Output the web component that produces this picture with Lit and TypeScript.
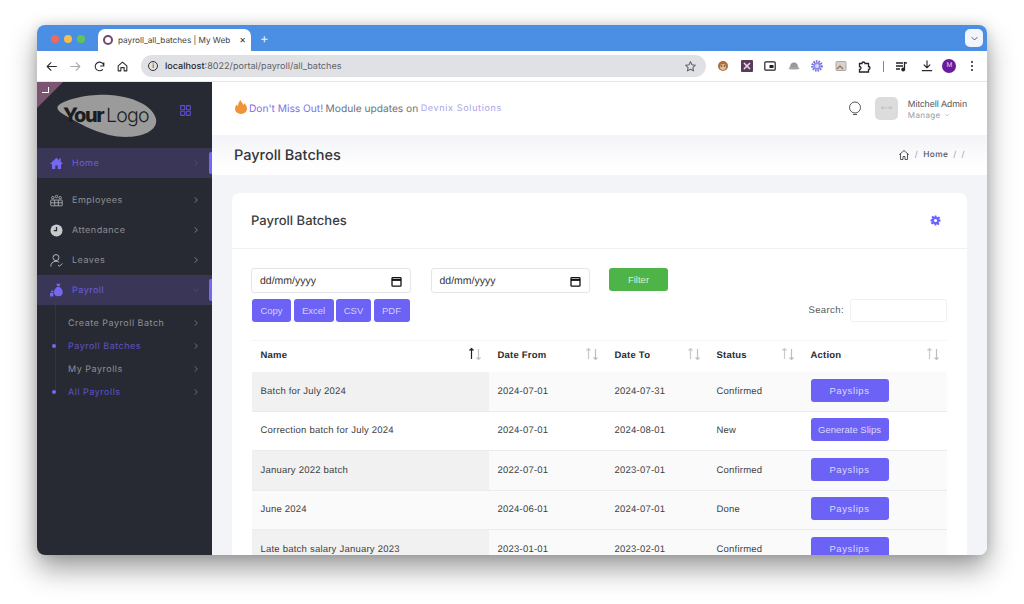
import { LitElement, css, html, svg } from 'lit';
import { customElement } from 'lit/decorators.js';

const ROWS = [
  ['Batch for July 2024', '2024-07-01', '2024-07-31', 'Confirmed', 'Payslips'],
  ['Correction batch for July 2024', '2024-07-01', '2024-08-01', 'New', 'Generate Slips'],
  ['January 2022 batch', '2022-07-01', '2023-07-01', 'Confirmed', 'Payslips'],
  ['June 2024', '2024-06-01', '2024-07-01', 'Done', 'Payslips'],
  ['Late batch salary January 2023', '2023-01-01', '2023-02-01', 'Confirmed', 'Payslips'],
];

const COLUMNS = [
  { name: 'Name', width: 237, active: true },
  { name: 'Date From', width: 117 },
  { name: 'Date To', width: 102 },
  { name: 'Status', width: 94 },
  { name: 'Action', width: 145 },
];

const SUB_ITEMS = [
  { name: 'Create Payroll Batch', active: false },
  { name: 'Payroll Batches', active: true },
  { name: 'My Payrolls', active: false },
  { name: 'All Payrolls', active: true },
];

const icon = (size: number, content: unknown, box = 24) => html`
  <svg width=${size} height=${size} viewBox="0 0 ${box} ${box}" fill="none" stroke="currentColor" stroke-width="2" stroke-linecap="round" stroke-linejoin="round">${content}</svg>
`;

const chevron = svg`<path d="M9 5l7 7-7 7" />`;
const chevronDown = svg`<path d="M5 9l7 7 7-7" />`;

const sortArrows = (active = false) => html`
  <svg class="sort" width="16" height="14" viewBox="0 0 16 14" fill="none" stroke-width="1.2">
    <g stroke=${active ? '#222' : '#c8cacd'}><path d="M4.5 12V1.5M2.500 3.500l2-2 2 2" /></g>
    <g stroke="#bcbec3"><path d="M11.5 2v10.500M9.500 10.500l2 2 2-2" /></g>
  </svg>
`;

@customElement('app-root')
export class AppRoot extends LitElement {
  renderTabBar() {
    return html`
      <div class="tabbar">
        <div class="lights"><i class="red"></i><i class="yellow"></i><i class="green"></i></div>
        <div class="tab">
          <span class="favicon"></span>
          <span class="tab-title">payroll_all_batches | My Web</span>
          <span class="tab-close">✕</span>
        </div>
        <span class="newtab">+</span>
        <span class="chrome-menu">${icon(9, chevronDown)}</span>
      </div>
    `;
  }

  renderToolbar() {
    return html`
      <div class="toolbar">
        <div class="nav">
          ${icon(13, svg`<path d="M21 12H4M11 5l-7 7 7 7" />`)}
          <span class="dim">${icon(13, svg`<path d="M3 12h17M13 5l7 7-7 7" />`)}</span>
          ${icon(13, svg`<path d="M20 11a8 8 0 1 0-2.3 6.6M20 5v6h-6" />`)}
          ${icon(13, svg`<path d="M4 11l8-7 8 7v9h-5v-6H9v6H4z" />`)}
        </div>
        <div class="omnibox">
          <span class="info">i</span>
          <span class="url"><b>localhost</b>:8022/portal/payroll/all_batches</span>
          ${icon(13, svg`<path d="M12 3l2.7 5.8 6.3.8-4.6 4.3 1.2 6.2L12 17l-5.6 3.1 1.2-6.2L3 9.6l6.3-.8z" />`)}
        </div>
        <div class="extensions">
          <svg width="12" height="12" viewBox="0 0 12 12"><circle cx="6" cy="6" r="5" fill="#a8703f" /><circle cx="6" cy="7" r="3" fill="#e5bd94" /><circle cx="4.5" cy="6" r=".8" fill="#333" /><circle cx="7.5" cy="6" r=".8" fill="#333" /></svg>
          <svg width="12" height="12" viewBox="0 0 12 12"><rect width="12" height="12" rx="1" fill="#5c3a5e" /><path d="M3 3l6 6M9 3L3 9" stroke="#e6dbe6" stroke-width="1.6" /></svg>
          <svg width="12" height="12" viewBox="0 0 12 12" fill="none"><rect x=".8" y="1.8" width="10.4" height="8.4" rx="1" stroke="#222" stroke-width="1.2" /><rect x="5.500" y="5" width="4" height="3" fill="#222" /></svg>
          <svg width="12" height="12" viewBox="0 0 12 12"><path d="M2 8c0-4 1.500-5.500 4-5.500S10 4 10 8z" fill="#9a9a9a" /><ellipse cx="6" cy="8.300" rx="5.500" ry="1.300" fill="#a5a5a5" /></svg>
          <svg width="12" height="12" viewBox="0 0 12 12"><circle cx="6" cy="6" r="4.600" fill="none" stroke="#6f6ae0" stroke-width="2.400" stroke-dasharray="1.500 1" /><circle cx="6" cy="6" r="3.800" fill="#8f8bea" /><circle cx="6" cy="6" r="2" fill="#d8d6f8" /></svg>
          <svg width="12" height="12" viewBox="0 0 12 12" fill="none"><rect x="1" y="1.500" width="10" height="9" rx="1" fill="#d6d3cf" stroke="#aaa" /><path d="M2 9l3-3 3 3" stroke="#a9765a" stroke-width="1.500" /></svg>
          <svg class="puzzle" width="13" height="13" viewBox="0 0 13 13" fill="none" stroke="#222" stroke-width="1.300"><path d="M1.500 3.500h2.500a1.500 1.500 0 0 1 3 0h3.500v3a1.500 1.500 0 0 1 0 3v2.500H1.500v-2.500a1.500 1.500 0 0 0 0-3z" /></svg>
          <span class="ext-divider"></span>
          <svg width="13" height="13" viewBox="0 0 13 13" fill="none" stroke="#222" stroke-width="1.300"><path d="M1 3h7M1 6h7M1 9h4M9.500 9.500V2.500l2.500 .6" /><circle cx="8.200" cy="9.500" r="1.300" fill="#222" /></svg>
          ${icon(14, svg`<path d="M12 3v12M7 10l5 5 5-5M4 20h16" />`)}
          <span class="profile">M</span>
          <span class="kebab"><i></i><i></i><i></i></span>
        </div>
      </div>
    `;
  }

  renderSidebar() {
    return html`
      <aside class="sidebar">
        <span class="corner"><i></i></span>
        <div class="brand">
          <svg class="logo" width="101" height="44" viewBox="0 0 101 44">
            <path d="M1 12C8 5 32 0 52 1c22 1 44 10 47 24 2 11-12 18-30 18C46 43 23 30 13 24 7 21-2 16 1 12z" fill="#9b9b9b" />
            <text x="6" y="28" font-family="Inter, sans-serif" fill="#1d1d20"><tspan font-size="20" font-weight="800" letter-spacing="-1.500">Your</tspan><tspan dx="3" font-size="19.500" font-weight="300" letter-spacing="-.8">Logo</tspan></text>
          </svg>
          <span class="apps">${icon(13, svg`<rect x="3" y="3" width="7.500" height="7.500" rx="1" /><rect x="13.500" y="3" width="7.500" height="7.500" rx="1" /><rect x="3" y="13.500" width="7.500" height="7.500" rx="1" /><rect x="13.500" y="13.500" width="7.500" height="7.500" rx="1" />`)}</span>
        </div>
        <a class="item active home">
          <svg class="item-icon" width="13" height="13" viewBox="0 0 13 13" fill="currentColor"><path d="M6.500 .8L.3 6.500l1 .9 .7-.6V12h3.300V8.500h2.400V12H11V6.800l.7 .6 1-.9-2-1.900V1.500H9v1.900z" /></svg>
          <span>Home</span>${icon(8, chevron)}
        </a>
        <div class="group">
          <a class="item">
            <svg class="item-icon" width="14" height="13" viewBox="0 0 14 13" fill="none" stroke="currentColor" stroke-width=".9"><rect x=".8" y="6" width="12.400" height="6.200" rx=".6" /><path d="M.8 9h12.400M5 6v6.200M9 6v6.200" /><circle cx="3" cy="3.500" r="1.300" /><circle cx="7" cy="2.200" r="1.300" /><circle cx="11" cy="3.500" r="1.300" /></svg>
            <span>Employees</span>${icon(8, chevron)}
          </a>
          <a class="item">
            <svg class="item-icon clock" width="13" height="13" viewBox="0 0 13 13"><circle cx="6.500" cy="6.500" r="6" fill="currentColor" /><path d="M6.500 3v3.700H3.800" fill="none" stroke="#282a33" stroke-width="1.300" /></svg>
            <span>Attendance</span>${icon(8, chevron)}
          </a>
          <a class="item">
            <svg class="item-icon" width="13" height="13" viewBox="0 0 13 13" fill="none" stroke="currentColor" stroke-width="1"><circle cx="6" cy="3.600" r="3" /><path d="M.8 12.500c0-3.200 2-5.200 5.200-5.200 1.300 0 2.300 .3 3.100 .9M8 11l1.500 1.300L12.300 9.500" /></svg>
            <span>Leaves</span>${icon(8, chevron)}
          </a>
        </div>
        <a class="item active open">
          <svg class="item-icon" width="14" height="14" viewBox="0 0 14 14" fill="currentColor"><path fill-rule="evenodd" d="M6.800 .3h4.400L10.300 3H7.700zM7.600 3.800h2.800c2 1.200 3.300 3.400 3.300 5.700 0 2.800-1.700 4.200-4.700 4.200S4.300 12.300 4.300 9.500c0-2.300 1.300-4.500 3.300-5.700z" /><rect x="0" y="10" width="3.600" height="4" rx=".5" /><rect x="1.200" y="7.600" width="2.600" height="1.800" rx=".4" /></svg>
          <span>Payroll</span>${icon(8, chevronDown)}
        </a>
        <div class="submenu">
          ${SUB_ITEMS.map(
            (s) => html`
              <a class="sub ${s.active ? 'on' : ''}">
                <span>${s.name}</span>${icon(8, chevron)}
              </a>
            `,
          )}
        </div>
      </aside>
    `;
  }

  renderHeader() {
    return html`
      <header class="topbar">
        <div class="promo">
          <svg width="12" height="14" viewBox="0 0 12 14"><path d="M5.500 0c.8 2.600 2.300 3.200 3 5 .5-.6 .8-1.300 .8-2C11 4.800 12 6.800 12 8.800 12 11.900 9.300 14 6 14S0 11.900 0 8.800c0-2 1-3.300 2-4.300 .2 .8 .5 1.300 1 1.700C3 3.800 4 1.500 5.500 0z" fill="#f0933a" /></svg>
          <span class="miss">Don't Miss Out!</span>
          <span>Module updates on</span>
          <span class="devnix">Devnix Solutions</span>
        </div>
        <div class="user">
          <svg class="bulb" width="14" height="15" viewBox="0 0 14 15" fill="none" stroke="#555" stroke-width="1"><circle cx="7" cy="6.500" r="5.500" /><path d="M5 13.500h4" /></svg>
          <span class="avatar">M × M</span>
          <div class="user-text">
            <span class="user-name">Mitchell Admin</span>
            <span class="manage">Manage ${icon(6, chevronDown)}</span>
          </div>
        </div>
      </header>
      <div class="titlebar">
        <h1>Payroll Batches</h1>
        <div class="crumbs">
          ${icon(12, svg`<path d="M3 11l9-8 9 8M5 9.500V21h5v-6h4v6h5V9.500" />`)}
          <span class="sep">/</span><b>Home</b><span class="sep">/</span><span class="sep">/</span>
        </div>
      </div>
    `;
  }

  renderDate() {
    return html`
      <div class="date">
        <span>dd/mm/yyyy</span>
        <svg width="11" height="11" viewBox="0 0 11 11" fill="none" stroke="#111" stroke-width="1.300"><rect x="1" y="1.600" width="9" height="8.600" rx=".8" /><path d="M1 3.900h9" stroke-width="2" /></svg>
      </div>
    `;
  }

  renderCard() {
    return html`
      <section class="card">
        <div class="card-head">
          <h2>Payroll Batches</h2>
          <svg width="11" height="11" viewBox="0 0 24 24" fill="#6c63ff"><path fill-rule="evenodd" d="M10 1h4l.7 3.200 1.900.8 2.800-1.800 2.800 2.800-1.800 2.800.8 1.900L23 10v4l-3.200.7-.8 1.900 1.800 2.800-2.800 2.800-2.800-1.800-1.900.8L14 23h-4l-.7-3.200-1.900-.8-2.800 1.800-2.800-2.800 1.800-2.800-.8-1.900L1 14v-4l3.200-.7.8-1.900-1.800-2.800 2.800-2.800 2.800 1.800 1.900-.8zM12 8.500a3.500 3.500 0 1 0 0 7 3.500 3.500 0 0 0 0-7z" /></svg>
        </div>
        <div class="card-body">
          <div class="filters">
            ${this.renderDate()} ${this.renderDate()}
            <button class="filter">Filter</button>
          </div>
          <div class="tools">
            <div class="exports">
              <button>Copy</button><button>Excel</button><button>CSV</button><button>PDF</button>
            </div>
            <label class="search">Search: <span class="search-box"></span></label>
          </div>
          <table>
            <colgroup>${COLUMNS.map((c) => html`<col style="width:${c.width}px" />`)}</colgroup>
            <thead>
              <tr>
                ${COLUMNS.map((c) => html`<th><span class="th-in">${c.name}${sortArrows(c.active)}</span></th>`)}
              </tr>
            </thead>
            <tbody>
              ${ROWS.map(
                (r) => html`
                  <tr>
                    <td>${r[0]}</td><td>${r[1]}</td><td>${r[2]}</td><td>${r[3]}</td>
                    <td><button class="slip ${r[4].length > 8 ? 'long' : ''}">${r[4]}</button></td>
                  </tr>
                `,
              )}
            </tbody>
          </table>
        </div>
      </section>
    `;
  }

  render() {
    return html`
      <div class="window">
        ${this.renderTabBar()} ${this.renderToolbar()}
        <div class="app">
          ${this.renderSidebar()}
          <main class="main">
            ${this.renderHeader()}
            <div class="content">${this.renderCard()}</div>
          </main>
        </div>
      </div>
    `;
  }

  static styles = css`
    :host {
      display: block;
      width: 1024px;
      height: 604px;
      box-sizing: border-box;
      padding: 25px 37px 49px;
      background: #fff;
      font-family: 'Liberation Sans', Arial, sans-serif;
      text-rendering: geometricPrecision;
      overflow: hidden;
    }

    * {
      box-sizing: border-box;
    }

    .window {
      height: 530px;
      display: flex;
      flex-direction: column;
      border-radius: 8px;
      overflow: hidden;
      background: #fff;
      box-shadow: 0 14px 28px rgba(0, 0, 0, 0.38), 0 0 12px rgba(0, 0, 0, 0.14);
    }

    /* browser chrome */
    .tabbar {
      height: 26px;
      flex: none;
      display: flex;
      align-items: flex-end;
      background: #4a8fe4;
      font-family: Inter, sans-serif;
    }

    .lights {
      display: flex;
      gap: 5px;
      padding: 0 0 8px 14px;
      width: 61px;
    }

    .lights i {
      width: 8px;
      height: 8px;
      border-radius: 50%;
    }

    .red { background: #ee6a5f; }
    .yellow { background: #f5bd4f; }
    .green { background: #61c454; }

    .tab {
      position: relative;
      width: 153px;
      height: 22px;
      display: flex;
      align-items: center;
      padding: 0 9px 0 5px;
      background: #fff;
      border-radius: 7px 7px 0 0;
      font-size: 8.200px;
      color: #3c4043;
    }

    .favicon {
      width: 10px;
      height: 10px;
      flex: none;
      border: 2.200px solid #6f4a6c;
      border-radius: 50%;
      margin-right: 5px;
    }

    .tab-title {
      flex: 1;
      white-space: nowrap;
    }

    .tab-close {
      position: relative;
      font-size: 8px;
      color: #333;
      padding-left: 9px;
      background: linear-gradient(90deg, transparent, #fff 7px);
    }

    .newtab {
      color: #e5effb;
      font-size: 13px;
      line-height: 14px;
      margin: 0 0 5px 9px;
    }

    .chrome-menu {
      margin: 0 4px 4px auto;
      width: 18px;
      height: 18px;
      display: flex;
      align-items: center;
      justify-content: center;
      background: #f2f6fc;
      border-radius: 5px;
      color: #333;
    }

    .toolbar {
      height: 31px;
      flex: none;
      display: flex;
      align-items: center;
      background: #fff;
      border-bottom: 1px solid #e3e5ea;
      padding: 0 11px 0 8px;
      color: #2b2d30;
    }

    .nav {
      display: flex;
      align-items: center;
      gap: 10.800px;
      width: 96px;
    }

    .nav svg {
      display: block;
    }

    .dim {
      color: #a9abb0;
    }

    .omnibox {
      width: 565px;
      height: 22px;
      display: flex;
      align-items: center;
      padding: 0 9px 0 5px;
      border-radius: 11px;
      background: #dfe1e5;
      font-size: 9.100px;
      color: #5f6266;
      font-family: Inter, sans-serif;
      margin-right: 11px;
    }

    .info {
      width: 10px;
      height: 10px;
      border: 1px solid #333;
      border-radius: 50%;
      font-size: 7px;
      line-height: 8px;
      text-align: center;
      color: #222;
      margin: 0 7px 0 2px;
    }

    .url {
      flex: 1;
    }

    .url b {
      font-weight: 500;
      color: #26282b;
    }

    .extensions {
      flex: 1;
      display: flex;
      align-items: center;
      justify-content: space-between;
    }

    .ext-divider {
      width: 1px;
      height: 11px;
      background: #4a8fe4;
    }

    .profile {
      width: 14px;
      height: 14px;
      margin-left: -3px;
      border-radius: 50%;
      background: #6a1b9a;
      color: #e7d4ef;
      font-size: 7px;
      line-height: 14px;
      text-align: center;
    }

    .kebab {
      display: flex;
      flex-direction: column;
      gap: 2px;
      padding: 0 3px;
    }

    .kebab i {
      width: 2px;
      height: 2px;
      border-radius: 50%;
      background: #222;
    }

    /* app */
    .app {
      flex: 1;
      min-height: 0;
      display: flex;
    }

    .sidebar {
      position: relative;
      width: 175px;
      flex: none;
      background: #282a33;
      font-family: Inter, sans-serif;
      font-size: 9px;
      letter-spacing: 0.5px;
      color: #8f9096;
    }

    .corner {
      position: absolute;
      left: 0;
      top: 0;
      width: 26px;
      height: 26px;
      background: #7a5471;
      clip-path: polygon(0 0, 100% 0, 0 100%);
    }

    .corner i {
      position: absolute;
      left: 5px;
      top: 5px;
      width: 7px;
      height: 6px;
      border-right: 1.500px solid #fff;
      border-bottom: 1.500px solid #fff;
    }

    .brand {
      height: 66px;
      display: flex;
      align-items: center;
      padding: 0 20px 0 20px;
      justify-content: space-between;
    }

    .logo {
      margin-top: 2px;
    }

    .apps {
      display: flex;
      color: #5b4fd6;
      margin-bottom: 10px;
    }

    .item {
      position: relative;
      height: 30px;
      display: flex;
      align-items: center;
      padding: 0 12px 0 13px;
      gap: 9px;
    }

    .item span {
      flex: 1;
      padding-top: 1px;
    }

    .item-icon {
      flex: none;
      width: 13px;
      color: #b3b4b8;
    }

    .clock {
      color: #c8c9cc;
    }

    .item.active {
      background: #393658;
      color: #6c5fe0;
    }

    .item.active .item-icon {
      color: #7467f0;
    }

    .item.active::after {
      content: '';
      position: absolute;
      right: 0;
      top: 4px;
      bottom: 4px;
      width: 3px;
      border-radius: 2px 0 0 2px;
      background: #7467f0;
    }

    .item.active > svg:last-child {
      color: #5c5a80;
    }

    .item > svg:last-child {
      color: #a8a9ad;
    }

    .group {
      padding: 7px 0 0;
    }

    .submenu {
      position: relative;
      padding: 6px 0 0 31px;
    }

    .submenu::before {
      content: '';
      position: absolute;
      left: 18px;
      top: 0;
      bottom: 12px;
      width: 1px;
      background: #34363f;
    }

    .sub {
      position: relative;
      height: 23px;
      display: flex;
      align-items: center;
      justify-content: space-between;
      padding: 1px 12px 0 0;
      color: #909197;
    }

    .sub > svg {
      color: #8f9096;
    }

    .sub.on {
      color: #5f53c9;
    }

    .sub.on::before {
      content: '';
      position: absolute;
      left: -16px;
      top: 10px;
      width: 4px;
      height: 4px;
      border-radius: 50%;
      background: #7467f0;
    }

    .main {
      flex: 1;
      min-width: 0;
      display: flex;
      flex-direction: column;
      background: #f2f4f8;
    }

    .topbar {
      height: 53px;
      flex: none;
      display: flex;
      align-items: center;
      justify-content: space-between;
      padding: 0 20px 0 23px;
      background: #fff;
      font-family: Inter, sans-serif;
      font-size: 10.200px;
      color: #70727a;
    }

    .promo {
      display: flex;
      align-items: center;
      gap: 2.500px;
    }

    .promo svg {
      margin-right: -0.500px;
      margin-bottom: 3px;
    }

    .miss {
      color: #7c72e8;
    }

    .devnix {
      color: #a9a4e6;
      font-size: 9px;
      letter-spacing: 0.65px;
    }

    .user {
      display: flex;
      align-items: center;
    }

    .bulb {
      margin-right: 13px;
    }

    .avatar {
      width: 23px;
      height: 23px;
      border-radius: 5px;
      background: #dcdcdc;
      color: #a5a5a5;
      font-size: 3.500px;
      line-height: 23px;
      text-align: center;
      margin-right: 10px;
      white-space: nowrap;
    }

    .user-text {
      display: flex;
      flex-direction: column;
      margin-top: 1px;
    }

    .user-name {
      color: #55575c;
      font-family: 'Liberation Sans', Arial, sans-serif;
      font-size: 9.200px;
      line-height: 12px;
    }

    .manage {
      display: flex;
      align-items: center;
      gap: 3px;
      font-size: 8px;
      letter-spacing: 0.4px;
      line-height: 10px;
      color: #9a9ca1;
    }

    .titlebar {
      height: 40px;
      flex: none;
      display: flex;
      align-items: center;
      justify-content: space-between;
      padding: 0 22px 0 22px;
      background: linear-gradient(#f3f4f7, #fdfdfe 70%, #fff);
      font-family: Inter, sans-serif;
    }

    h1 {
      margin: 0;
      font-size: 14.500px;
      font-weight: 500;
      color: #33353b;
    }

    .crumbs {
      display: flex;
      align-items: center;
      gap: 5px;
      font-size: 8.300px;
      letter-spacing: 0.4px;
      color: #55575c;
    }

    .crumbs b {
      font-weight: 500;
    }

    .sep {
      color: #9a9ca1;
    }

    .content {
      flex: 1;
      min-height: 0;
      overflow: hidden;
      padding: 18px 20px 0;
    }

    .card {
      background: #fff;
      border-radius: 8px 8px 0 0;
    }

    .card-head {
      height: 56px;
      display: flex;
      align-items: center;
      justify-content: space-between;
      padding: 0 26px 0 19px;
      border-bottom: 1px solid #f0f1f4;
    }

    h2 {
      margin: 0;
      font-family: Inter, sans-serif;
      font-size: 13px;
      font-weight: 500;
      color: #3a3c42;
    }

    .card-body {
      padding: 19px 20px 0 19px;
    }

    .filters {
      display: flex;
      gap: 20px;
      align-items: flex-start;
    }

    .date {
      width: 159.500px;
      height: 25px;
      display: flex;
      align-items: center;
      justify-content: space-between;
      padding: 1px 8px 0 8px;
      border: 1px solid #e3e5e9;
      border-radius: 3px;
      font-size: 10.500px;
      color: #333;
    }

    .filter {
      width: 59px;
      height: 23px;
      margin-left: -1px;
      border: none;
      border-radius: 3px;
      background: #4fb448;
      color: #d9efd6;
      font: 9.500px 'Liberation Sans', sans-serif;
    }

    .tools {
      display: flex;
      justify-content: space-between;
      align-items: center;
      height: 23px;
      margin-top: 6px;
      padding-left: 1px;
    }

    .exports {
      display: flex;
      gap: 2.500px;
    }

    .exports button {
      width: 39px;
      height: 23px;
      padding: 0;
      border: none;
      border-radius: 3px;
      background: #6c63f6;
      color: #d3d0fb;
      font: 9.500px 'Liberation Sans', sans-serif;
    }

    .exports button:nth-child(2) {
      width: 40px;
    }

    .exports button:nth-child(3) {
      width: 35px;
    }

    .exports button:nth-child(4) {
      width: 36px;
    }

    .search {
      display: flex;
      align-items: center;
      gap: 6px;
      font-size: 9.500px;
      letter-spacing: 0.4px;
      color: #55575c;
    }

    .search-box {
      width: 97px;
      height: 23px;
      border: 1px solid #f0f1f3;
      border-radius: 2px;
    }

    table {
      width: 695px;
      margin: 18px 0 0 1px;
      border-collapse: collapse;
      table-layout: fixed;
      font-size: 9.500px;
      letter-spacing: 0.22px;
      color: #3d3f44;
    }

    th {
      height: 31px;
      padding: 0 6px 2px 8.500px;
      text-align: left;
      font-weight: 700;
      color: #2b2d31;
      border-top: 1px solid #f3f4f6;
    }

    .th-in {
      display: flex;
      align-items: center;
      justify-content: space-between;
    }

    .sort {
      margin-top: -3px;
    }

    td {
      height: 39.500px;
      padding: 0 0 0 8.500px;
      border-top: 1px solid #ebecef;
      background: #fafafa;
      white-space: nowrap;
    }

    tbody tr:first-child td {
      border-top: none;
    }

    td:first-child {
      background: #f1f1f1;
    }

    tbody tr:nth-child(even) td {
      background: #fff;
    }

    tbody tr:nth-child(4) td {
      background: #fafafa;
    }

    tbody tr:nth-child(5) td {
      background: #fafafa;
    }

    tbody tr:nth-child(5) td:first-child {
      background: #f1f1f1;
    }

    .slip {
      width: 78px;
      height: 23px;
      display: block;
      margin-bottom: 2px;
      padding: 0;
      border: none;
      border-radius: 3px;
      background: #6c63f6;
      color: #dcdafc;
      font: 9.500px 'Liberation Sans', sans-serif;
      letter-spacing: 0.6px;
    }

    .slip.long {
      letter-spacing: 0;
    }
  `;
}
